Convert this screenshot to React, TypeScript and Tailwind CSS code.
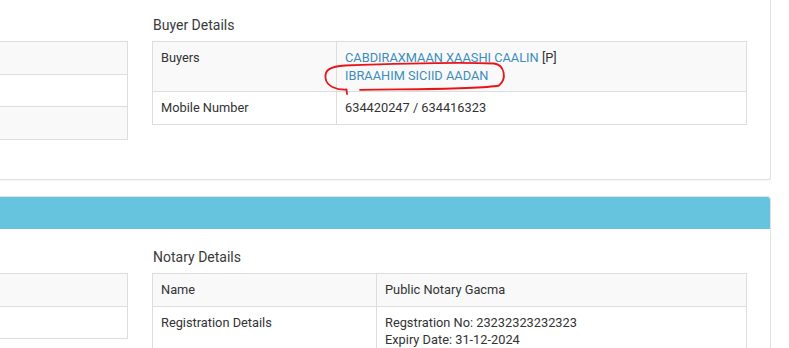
import React from "react";

const cell = "border border-[#ddd] px-[8px] py-[7px] leading-[17.5px] align-top text-left font-normal";

function BlankTable({ rows }: { rows: number }) {
  return (
    <table className="w-full border-collapse border border-[#ddd]">
      <tbody>
        {Array.from({ length: rows }).map((_, i) => (
          <tr key={i} className={i % 2 === 0 ? "bg-[#f9f9f9]" : "bg-white"}>
            <td className={cell}>&nbsp;</td>
            <td className={cell}>&nbsp;</td>
          </tr>
        ))}
      </tbody>
    </table>
  );
}

function Heading({ children }: { children?: React.ReactNode }) {
  return <h4 className="text-[14px] leading-[20px] h-[20px] mb-[6px] pl-px text-[#3a3a3a] font-normal">{children}</h4>;
}

export default function App() {
  return (
    <div className="relative w-[789px] h-[348px] overflow-hidden bg-white text-[12.8px] text-[#333] font-['Roboto','Liberation_Sans',sans-serif]">
      <div className="ml-[-500px] w-[1271px]">
        {/* Card 1 */}
        <div className="h-[180px] bg-white border-x border-b border-[#e1e1e1] rounded-b-[3px] shadow-[0_1px_1px_rgba(0,0,0,0.04)] pt-[15px] pl-[32px] pr-[23px] flex gap-[24px]">
          <div className="w-[595px]">
            <Heading />
            <BlankTable rows={3} />
          </div>
          <div className="w-[595px]">
            <Heading>Buyer Details</Heading>
            <table className="w-full border-collapse border border-[#ddd]">
              <tbody>
                <tr className="bg-[#f9f9f9]">
                  <td className={cell + " w-[184px]"}>Buyers</td>
                  <td className={cell}>
                    <span className="text-[#3c8dbc]">CABDIRAXMAAN XAASHI CAALIN</span> [P]
                    <br />
                    <span className="text-[#3c8dbc]">IBRAAHIM SICIID AADAN</span>
                  </td>
                </tr>
                <tr className="bg-white">
                  <td className={cell}>Mobile Number</td>
                  <td className={cell}>634420247 / 634416323</td>
                </tr>
              </tbody>
            </table>
          </div>
        </div>

        {/* Card 2 */}
        <div className="mt-[16px] bg-white border border-[#e1e1e1] rounded-[3px] h-[200px]">
          <div className="h-[32px] bg-[#67c4df] rounded-t-[3px]" />
          <div className="pt-[18px] pl-[32px] pr-[23px] flex gap-[24px]">
            <div className="w-[595px]">
              <Heading />
              <BlankTable rows={2} />
            </div>
            <div className="w-[595px]">
              <Heading>Notary Details</Heading>
              <table className="w-full border-collapse border border-[#ddd]">
                <tbody>
                  <tr className="bg-[#f9f9f9]">
                    <td className={cell + " w-[224px]"}>Name</td>
                    <td className={cell}>Public Notary Gacma</td>
                  </tr>
                  <tr className="bg-white">
                    <td className={cell}>Registration Details</td>
                    <td className={cell}>
                      Regstration No: 23232323232323
                      <br />
                      Expiry Date: 31-12-2024
                    </td>
                  </tr>
                </tbody>
              </table>
            </div>
          </div>
        </div>
      </div>

      <svg className="absolute left-0 top-0 pointer-events-none" width="789" height="348" viewBox="0 0 789 348">
        <path
          d="M347 94 L346.5 89.5 C336 90, 326.5 86, 325.5 78 C324.5 70, 330 66.5, 345 65.5 C400 63.5, 455 62, 494 63.5 C505 65, 507 79, 499 85.5 C480 89.5, 420 89, 360 89.8"
          fill="none"
          stroke="#e8141b"
          strokeWidth="1.8"
          strokeLinecap="round"
          strokeLinejoin="round"
        />
      </svg>
    </div>
  );
}
